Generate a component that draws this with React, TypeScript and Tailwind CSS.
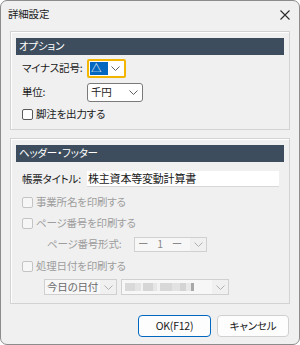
import React from 'react';

const font = "font-['Noto_Sans_CJK_JP','Noto_Sans',sans-serif] [font-feature-settings:'palt']";

function Chevron({ color = '#606060' }: { color?: string }) {
  return (
    <svg width="9" height="5" viewBox="0 0 9 5" className="shrink-0">
      <path d="M0.5 0.5 L4.5 4.5 L8.5 0.5" fill="none" stroke={color} strokeWidth="1" />
    </svg>
  );
}

function Checkbox({ label, disabled }: { label: string; disabled?: boolean }) {
  return (
    <div className="flex items-center gap-[3px] whitespace-nowrap">
      <div
        className={`w-[11px] h-[11px] shrink-0 rounded-[2px] border ${
          disabled ? 'border-[#c4c4c4] bg-[#f6f6f6]' : 'border-[#5a5a5a] bg-white'
        }`}
      />
      <span className={disabled ? 'text-[#9d9d9d]' : 'text-[#1a1a1a]'}>{label}</span>
    </div>
  );
}

function GroupHeader({ title }: { title: string }) {
  return (
    <div className="h-[17px] bg-[#3d4d5d] text-white flex items-center pl-[3px] whitespace-nowrap">
      {title}
    </div>
  );
}

// mosaic stand-in for the blurred date text
const mosaic = [
  { w: 10, c: '#d9d9d9' },
  { w: 6, c: '#e4e4e4' },
  { w: 2, c: '#f2f2f2' },
  { w: 10, c: '#d6d6d6' },
  { w: 4, c: '#e6e6e6' },
  { w: 3, c: '#f2f2f2' },
  { w: 12, c: '#d8d8d8' },
  { w: 8, c: '#e2e2e2' },
  { w: 6, c: '#d4d4d4' },
  { w: 5, c: '#e8e8e8' },
  { w: 3, c: '#a8a8a8' },
];

export default function App() {
  return (
    <div className={`w-[300px] h-[345px] bg-[#f0f0f0] border border-[#8c8c8c] rounded-[7px] overflow-hidden flex flex-col text-[10.5px] tracking-[-0.2px] leading-none text-[#1a1a1a] ${font}`}>
      {/* Title bar */}
      <div className="h-[30px] flex items-start justify-between pl-[7px] pr-[9px] pt-[8px] shrink-0">
        <span className="text-[#1a1a1a]">詳細設定</span>
        <svg width="10" height="10" viewBox="0 0 10 10" className="mt-[1px]">
          <path d="M0.5 0.5 L9.5 9.5 M9.5 0.5 L0.5 9.5" stroke="#2a2a2a" strokeWidth="1.1" />
        </svg>
      </div>

      <div className="px-[9px] flex flex-col">
        {/* オプション */}
        <div className="border border-[#d3d3d3] shadow-[inset_1px_1px_0_#ffffff] px-[5px] pt-[6px] pb-[4px]">
          <GroupHeader title="オプション" />
          <div className="pl-[6px]">
            <div className="h-[27px] flex items-center whitespace-nowrap">
              <span className="w-[65px] shrink-0">マイナス記号:</span>
              <div className="w-[39px] h-[19px] shrink-0 border-2 border-[#f2b500] rounded-[2px] bg-white flex items-center pl-[1px] pr-[4px] justify-between">
                <span className="bg-[#0067c0] text-white h-[13px] w-[18px] flex items-center pl-[1px]">△</span>
                <Chevron />
              </div>
            </div>
            <div className="h-[21px] flex items-center whitespace-nowrap">
              <span className="w-[65px] shrink-0">単位:</span>
              <div className="w-[56px] h-[19px] shrink-0 border border-[#7a7a7a] rounded-[3px] bg-white flex items-center pl-[3px] pr-[4px] justify-between">
                <span>千円</span>
                <Chevron />
              </div>
            </div>
            <div className="h-[22px] flex items-center">
              <Checkbox label="脚注を出力する" />
            </div>
          </div>
        </div>

        {/* ヘッダー・フッター */}
        <div className="mt-[8px] border border-[#d3d3d3] shadow-[inset_1px_1px_0_#ffffff] px-[5px] pt-[6px] pb-[6px]">
          <GroupHeader title="ヘッダー・フッター" />
          <div className="pl-[6px]">
            <div className="h-[24px] flex items-center mt-[5px] whitespace-nowrap">
              <span className="w-[65px] shrink-0">帳票タイトル:</span>
              <div className="w-[192px] h-[16px] shrink-0 bg-white border-b border-[#d8d8d8] flex items-center pl-[1px] text-[11px]">
                株主資本等変動計算書
              </div>
            </div>
            <div className="h-[22px] flex items-center">
              <Checkbox label="事業所名を印刷する" disabled />
            </div>
            <div className="h-[20px] flex items-center">
              <Checkbox label="ページ番号を印刷する" disabled />
            </div>
            <div className="h-[22px] flex items-center pl-[25px] whitespace-nowrap">
              <span className="w-[87px] shrink-0 text-[#9d9d9d]">ページ番号形式:</span>
              <div className="w-[73px] h-[15px] shrink-0 border border-[#d0d0d0] bg-[#f7f7f7] flex items-center">
                <span className="flex-1 h-full flex items-center pl-[3px] gap-[9px] text-[#8a8a8a]">
                  <span>ー</span>
                  <span>1</span>
                  <span>ー</span>
                </span>
                <span className="w-[16px] shrink-0 h-full flex items-center justify-center bg-[#f0f0f0]">
                  <Chevron color="#b0b0b0" />
                </span>
              </div>
            </div>
            <div className="h-[22px] flex items-center">
              <Checkbox label="処理日付を印刷する" disabled />
            </div>
            <div className="h-[20px] flex items-center pl-[22px] gap-[4px] whitespace-nowrap">
              <div className="w-[73px] h-[16px] shrink-0 border border-[#d0d0d0] bg-[#f7f7f7] flex items-center">
                <span className="flex-1 pl-[2px] text-[#6a6a6a]">今日の日付</span>
                <span className="w-[16px] shrink-0 h-full flex items-center justify-center bg-[#f0f0f0]">
                  <Chevron color="#b0b0b0" />
                </span>
              </div>
              <div className="w-[108px] h-[16px] shrink-0 border border-[#d0d0d0] bg-[#f7f7f7] flex items-center">
                <span className="flex-1 h-full flex items-center pl-[3px]">
                  {mosaic.map((m, i) => (
                    <span key={i} className="h-[8px]" style={{ width: m.w, background: m.c }} />
                  ))}
                </span>
                <span className="w-[16px] shrink-0 h-full flex items-center justify-center bg-[#f0f0f0]">
                  <Chevron color="#b0b0b0" />
                </span>
              </div>
            </div>
          </div>
        </div>

        {/* Buttons */}
        <div className="flex justify-end gap-[6px] mt-[11px] pr-[1px]">
          <button className="w-[73px] h-[22px] bg-[#fdfdfd] border border-[#0067c0] rounded-[4px] text-[#1a1a1a] flex items-center justify-center">
            OK(F12)
          </button>
          <button className="w-[72px] h-[22px] bg-[#fdfdfd] border border-[#d0d0d0] rounded-[4px] text-[#1a1a1a] flex items-center justify-center">
            キャンセル
          </button>
        </div>
      </div>
    </div>
  );
}
